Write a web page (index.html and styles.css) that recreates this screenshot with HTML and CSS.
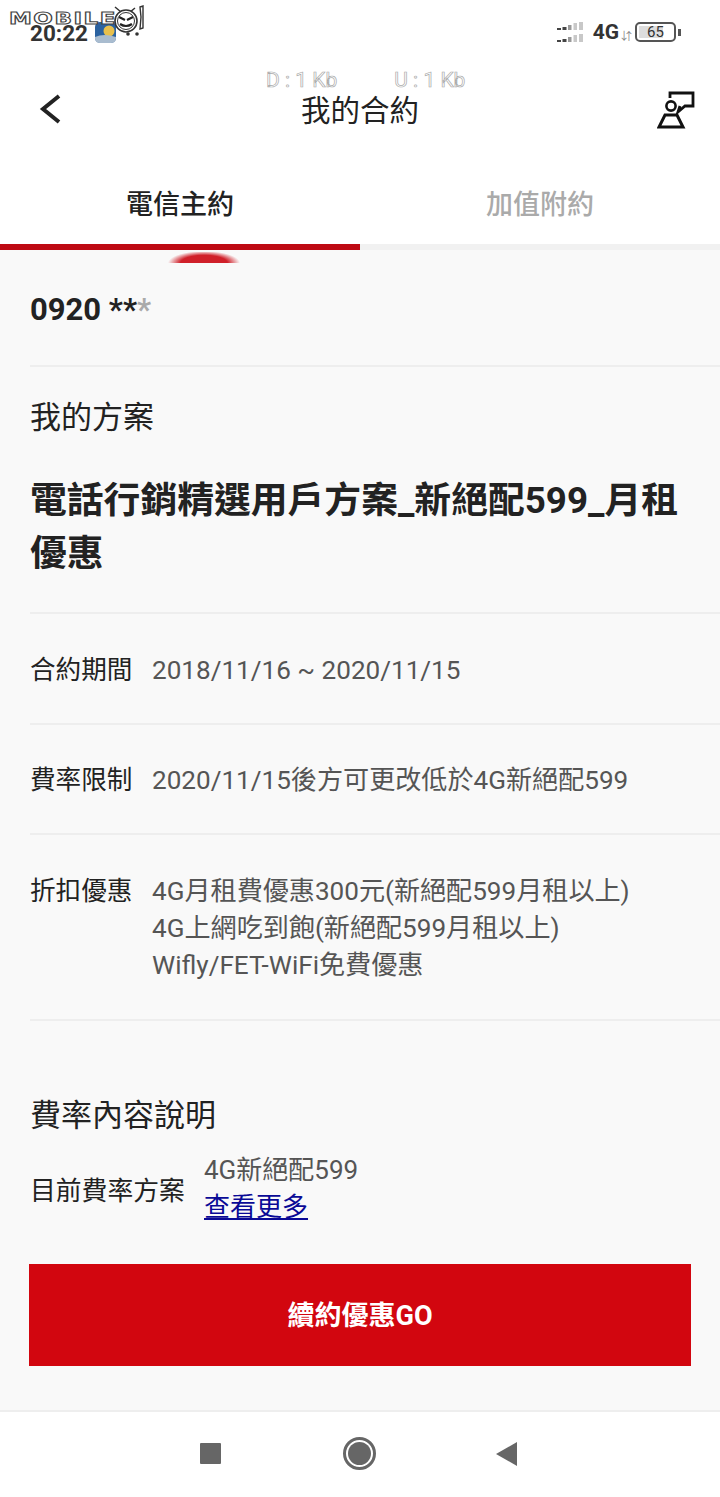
FILE: index.html
```html
<!DOCTYPE html>
<html lang="zh-Hant">
<head>
<meta charset="utf-8">
<title>我的合約</title>
<link rel="stylesheet" href="styles.css">
</head>
<body>
<div class="phone">
  <div class="watermark">
    <span class="wm-text">MOBILE</span>
    <svg class="wm-face" width="34" height="32" viewBox="0 0 34 32"><path d="M3 3l6 5q5-2 9 0l5-4" fill="none" stroke="#333" stroke-width="1.5"/><circle cx="14" cy="17" r="11" fill="#fff" stroke="#333" stroke-width="1.6"/><circle cx="14" cy="17" r="8.5" fill="none" stroke="#333" stroke-width="1"/><path d="M7 13l6 3M21 13l-6 3M8 20q6 4 12 0" fill="none" stroke="#222" stroke-width="2.2"/><path d="M28 3l3-1 0 22-3 1 1-12z" fill="#fff" stroke="#333" stroke-width="1.4"/><circle cx="16" cy="30" r="1.8" fill="#333"/><circle cx="25" cy="30" r="1.8" fill="#333"/></svg>
  </div>
  <header class="status">
    <div class="status-left">
      <span class="time">20:22</span>
      <svg width="22" height="22" viewBox="0 0 22 22"><rect x="0" y="0" width="21" height="21" rx="5" fill="#2b62a0"/><circle cx="14" cy="9" r="5.5" fill="#e8c04c"/><path d="M0 15q9-4 21 0v1q0 5-5 5H5q-5 0-5-5z" fill="#a9bccf"/></svg>
    </div>
    <div class="status-right">
      <svg width="27" height="22" viewBox="0 0 27 22"><g fill="#444"><rect x="0" y="7" width="4" height="2"/><rect x="5.5" y="6" width="4" height="3"/><rect x="0" y="19" width="4" height="2"/><rect x="5.5" y="18" width="4" height="3"/></g><g fill="#999"><rect x="11" y="4" width="3.5" height="5"/><rect x="11" y="16" width="3.5" height="5"/></g><g fill="#c8c8c8"><rect x="16.5" y="2" width="3.5" height="7"/><rect x="22" y="1" width="4" height="8"/><rect x="16.5" y="14" width="3.5" height="7"/><rect x="22" y="13" width="4" height="8"/></g></svg>
      <span class="net">4G</span>
      <span class="arrows">⇵</span>
      <span class="battery"><span class="battery-fill"></span><span class="battery-num">65</span></span>
      <span class="battery-tip"></span>
    </div>
  </header>
  <nav class="navbar">
    <svg class="back" width="22" height="30" viewBox="0 0 22 30"><path d="M20 2L4 15l16 13" fill="none" stroke="#222" stroke-width="4"/></svg>
    <div class="nav-title">我的合約</div>
    <svg class="person" width="38" height="38" viewBox="0 0 38 38"><path d="M13 7V2h23v13h-8l-7 6 2-6" fill="none" stroke="#111" stroke-width="2.8"/><circle cx="14" cy="15" r="4.6" fill="none" stroke="#111" stroke-width="2.6"/><path d="M8 24h12l6 12H2z" fill="none" stroke="#111" stroke-width="3"/></svg>
    <div class="speed"><span>D : 1 Kb</span><span>U : 1 Kb</span></div>
  </nav>
  <div class="tabs">
    <div class="tab tab-active">電信主約</div>
    <div class="tab">加值附約</div>
  </div>
  <main class="content">
    <div class="arc"></div>
    <section class="block phone-no">0920 <span class="mask">**<span class="mask-fade">*</span></span></section>
    <section class="block plan">
      <div class="plan-label">我的方案</div>
      <h1 class="plan-name">電話行銷精選用戶方案_新絕配599_月租優惠</h1>
    </section>
    <section class="block row row-one">
      <div class="row-key">合約期間</div>
      <div class="row-val">2018/11/16 ~ 2020/11/15</div>
    </section>
    <section class="block row row-two">
      <div class="row-key">費率限制</div>
      <div class="row-val">2020/11/15後方可更改低於4G新絕配599</div>
    </section>
    <section class="block row row-three">
      <div class="row-key">折扣優惠</div>
      <div class="row-val">4G月租費優惠300元(新絕配599月租以上)<br>4G上網吃到飽(新絕配599月租以上)<br>Wifly/FET-WiFi免費優惠</div>
    </section>
    <section class="rate">
      <h2 class="rate-title">費率內容說明</h2>
      <div class="rate-row">
        <div class="rate-key">目前費率方案</div>
        <div class="rate-val">4G新絕配599<br><a class="rate-link" href="#">查看更多</a></div>
      </div>
    </section>
    <button class="cta">續約優惠GO</button>
  </main>
  <footer class="sysnav">
    <span class="sys-square"></span>
    <span class="sys-circle"><span class="sys-dot"></span></span>
    <svg width="21" height="24" viewBox="0 0 21 24"><path d="M0 12L21 0v24z" fill="#666"/></svg>
  </footer>
</div>
</body>
</html>
```
FILE: styles.css
```css
* { box-sizing: border-box; }
html, body { margin: 0; padding: 0; }
body {
  width: 720px;
  height: 1497px;
  overflow: hidden;
  background: #fff;
  font-family: Roboto, "Noto Sans CJK TC", "Noto Sans", sans-serif;
  color: #222;
}
.phone { position: relative; width: 720px; height: 1497px; display: flex; flex-direction: column; }

.watermark { position: absolute; left: 9px; top: 4px; width: 140px; height: 32px; z-index: 3; }
.wm-text { position: absolute; left: 0; top: 7px; font: 700 15px/16px "DejaVu Sans", sans-serif; letter-spacing: 1px; color: #fff; -webkit-text-stroke: 0.9px #444; transform: scaleX(1.53); transform-origin: left center; }
.wm-face { position: absolute; left: 103px; top: 0; }

.status { height: 60px; padding: 21px 39px 0 30px; display: flex; justify-content: space-between; align-items: flex-start; }
.status-left { display: flex; align-items: center; gap: 7px; height: 24px; }
.time { font-size: 22.5px; font-weight: 700; color: #333; line-height: 24px; }
.status-right { display: flex; align-items: center; height: 22px; }
.net { font-size: 21px; font-weight: 700; color: #333; margin-left: 9px; }
.arrows { font-size: 11px; color: #888; margin: 6px 5px 0 2px; width: 9px; }
.battery { position: relative; width: 41px; height: 20px; border: 2px solid #555; border-radius: 5px; display: block; }
.battery-fill { position: absolute; left: 2px; top: 2px; bottom: 2px; width: 24px; background: #ddd; }
.battery-num { position: absolute; left: 0; right: 0; top: -2px; text-align: center; font-size: 15px; line-height: 20px; color: #333; }
.battery-tip { width: 3px; height: 7px; background: #555; margin-left: 2px; }

.navbar { position: relative; height: 100px; display: flex; align-items: center; justify-content: space-between; padding: 0 25px 0 39px; }
.nav-title { font-size: 29.5px; line-height: 40px; color: #222; position: absolute; left: 0; right: 0; top: 31px; text-align: center; }
.back { margin-top: -2px; }
.person { margin-top: 0; }
.speed { position: absolute; left: 266px; top: 7px; display: flex; gap: 57px; font-size: 21px; line-height: 26px; color: #fff; -webkit-text-stroke: 0.7px #aaa; }

.tabs { height: 90px; display: flex; background: #fff; }
.tab { flex: 1; text-align: center; font-size: 27px; font-weight: 500; line-height: 90px; height: 90px; color: #aaa; border-bottom: 6px solid #f1f1f1; }
.tab-active { color: #222; border-bottom-color: #be0a14; }

.content { position: relative; flex: 1; background: #f9f9f9; padding-left: 30px; overflow: hidden; }
.arc { position: absolute; left: 168px; top: 2px; width: 72px; height: 11px; background: radial-gradient(ellipse 36px 12px at 50% 100%, #d0202a 65%, rgba(208,32,42,0) 100%); }
.block { border-bottom: 2px solid #eee; }
.phone-no { height: 117px; padding-top: 38px; font-size: 31px; font-weight: 700; line-height: 44px; color: #222; }
.mask { letter-spacing: 0; }
.mask-fade { color: #aaa; }
.plan { height: 247px; }
.plan-label { padding-top: 31px; font-size: 31px; line-height: 40px; color: #222; }
.plan-name { margin: 36px 30px 0 0; font-size: 36.8px; line-height: 53px; font-weight: 700; color: #222; }
.row { display: flex; font-size: 26.1px; line-height: 37px; }
.row-one { height: 111px; padding-top: 38px; }
.row-two { height: 110px; padding-top: 37px; }
.row-three { height: 186px; padding-top: 38px; }
.row-key { width: 122px; color: #222; flex: none; font-size: 25.6px; }
.row-val { color: #555; }
.rate { padding-top: 73px; }
.rate-title { margin: 0; font-size: 31px; line-height: 44px; font-weight: 400; color: #222; }
.rate-row { display: flex; align-items: center; margin-top: 12px; }
.rate-key { width: 174px; flex: none; font-size: 25.8px; color: #222; }
.rate-val { font-size: 26px; line-height: 37px; color: #555; padding-top: 2px; }
.rate-link { color: #0a0a96; text-decoration: underline; }
.cta { display: block; width: 662px; height: 102px; margin: 38px 0 0 -1px; padding: 0 0 3px; border: 0; background: #d2060f; color: #fff; font: 700 27px Roboto, "Noto Sans CJK TC", sans-serif; }

.sysnav { height: 87px; border-top: 2px solid #eee; background: #fff; display: flex; align-items: center; padding: 0 203px 2px 200px; justify-content: space-between; }
.sys-square { width: 21px; height: 21px; background: #666; border-radius: 1px; }
.sys-circle { width: 33px; height: 33px; margin-left: 2px; border: 3px solid #666; border-radius: 50%; display: flex; align-items: center; justify-content: center; }
.sys-dot { width: 23px; height: 23px; background: #666; border-radius: 50%; }
```
